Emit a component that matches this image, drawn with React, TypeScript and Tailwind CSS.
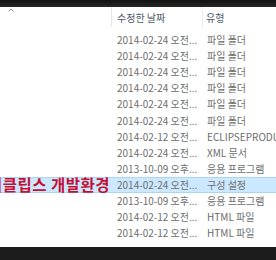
const rows: { date: string; type: string; selected?: boolean }[] = [
  { date: '2014-02-24 오전...', type: '파일 폴더' },
  { date: '2014-02-24 오전...', type: '파일 폴더' },
  { date: '2014-02-24 오전...', type: '파일 폴더' },
  { date: '2014-02-24 오전...', type: '파일 폴더' },
  { date: '2014-02-24 오전...', type: '파일 폴더' },
  { date: '2014-02-24 오전...', type: '파일 폴더' },
  { date: '2014-02-12 오전...', type: 'ECLIPSEPRODUC' },
  { date: '2014-02-24 오전...', type: 'XML 문서' },
  { date: '2013-10-09 오후...', type: '응용 프로그램' },
  { date: '2014-02-24 오전...', type: '구성 설정', selected: true },
  { date: '2013-10-09 오후...', type: '응용 프로그램' },
  { date: '2014-02-12 오전...', type: 'HTML 파일' },
  { date: '2014-02-12 오전...', type: 'HTML 파일' },
]

export default function App() {
  return (
    <div
      className="flex h-[260px] w-[276px] flex-col overflow-hidden bg-white text-[10px] leading-none"
      style={{ fontFamily: '"Noto Sans CJK KR", "Noto Sans", sans-serif' }}
    >
      <div className="h-[7px] shrink-0 bg-gradient-to-b from-[#111111] to-[#262626]" />

      {/* column headers */}
      <div className="flex h-[25px] shrink-0 items-start text-[#4d5766]">
        <div className="relative h-[20px] w-[112px] border-r border-[#e3e6ea] pt-[2px]">
          <svg viewBox="0 0 6 4" className="absolute left-[8px] top-[1px] h-[4px] w-[6px]" aria-hidden="true">
            <path d="M0.5 3.5 L3 1 L5.5 3.5" fill="none" stroke="#7f93a8" strokeWidth="1" />
          </svg>
        </div>
        <div className="flex h-[20px] w-[91px] items-center border-r border-[#eceef1] pl-[5px] pt-[2px]">
          수정한 날짜
        </div>
        <div className="flex h-[20px] items-center pl-[3px] pt-[2px]">유형</div>
      </div>

      {/* rows */}
      <div className="flex flex-col">
        {rows.map((r, i) => (
          <div
            key={i}
            className={`relative flex h-[16.1px] items-center text-[#6d6d6d] ${
              r.selected ? 'border-y border-[#a9d5f7] bg-[#cce8ff]' : ''
            }`}
          >
            <div className="w-[112px] shrink-0">
              {r.selected && (
                <span className="absolute left-[-12px] top-1/2 -translate-y-1/2 whitespace-nowrap text-[15.5px] font-bold tracking-[0.5px] text-[#c20f33]">
                  이클립스 개발환경
                </span>
              )}
            </div>
            <div className="w-[91px] shrink-0 whitespace-nowrap pl-[5px]">{r.date}</div>
            <div className="whitespace-nowrap pl-[4px]">{r.type}</div>
          </div>
        ))}
      </div>

      <div className="flex-1" />
      <div className="h-[13px] shrink-0 bg-[#1c1c1c]" />
    </div>
  )
}
